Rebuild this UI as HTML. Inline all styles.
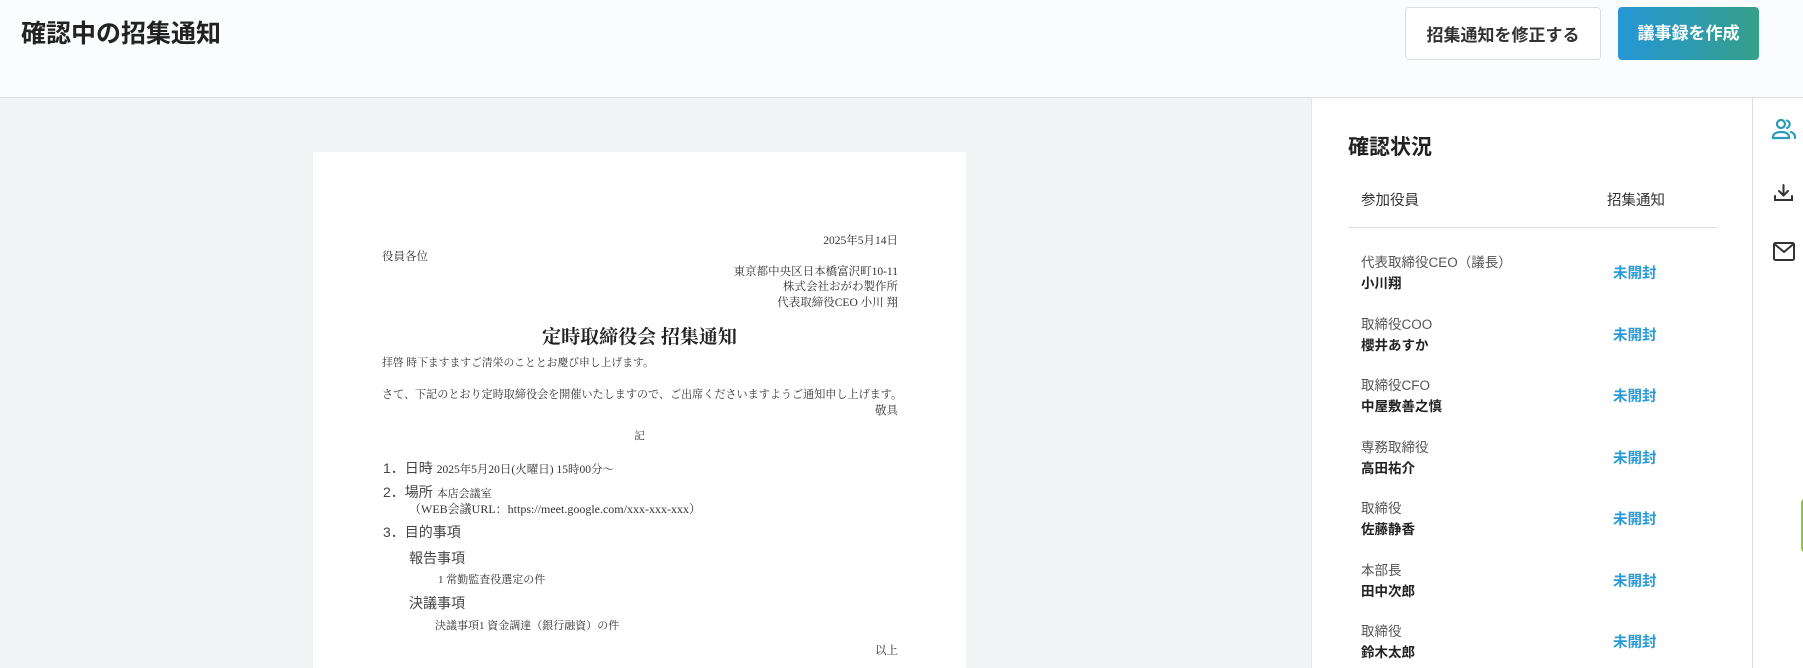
<!DOCTYPE html>
<html><head><meta charset="utf-8"><style>
*{margin:0;padding:0;box-sizing:border-box}
body{width:1803px;height:668px;overflow:hidden;background:#f2f3f4;font-family:"Liberation Sans","Noto Sans CJK JP",sans-serif;color:#222;position:relative}
.a{position:absolute;white-space:nowrap}
#hdr{position:absolute;left:0;top:0;width:1803px;height:98px;background:#fbfcfd;border-bottom:1px solid #dcdde0}
.btn{position:absolute;top:7px;height:53px;border-radius:4px;font-weight:bold;font-size:17px;display:flex;align-items:center;justify-content:center}
.pap{position:absolute;left:313px;top:152px;width:653px;height:516px;background:#fff;overflow:hidden}
.s{font-family:"Liberation Serif","Noto Serif CJK SC",serif;color:#333}
.p{position:absolute;left:1311px;top:98px;width:441px;height:570px;background:#fff;border-left:1px solid #e6e7e9}
.ic{position:absolute;left:1752px;top:98px;width:51px;height:570px;background:#fff;border-left:1px solid #dcdde0}
.role{font-size:13.5px;color:#555}
.nm{font-size:13.5px;font-weight:bold;color:#222}
.st{font-size:14.5px;font-weight:bold;color:#2a9bd6}
</style></head><body>
<div id="hdr">
<div class="a" style="left:21px;top:14px;font-size:25px;font-weight:bold;color:#222">確認中の招集通知</div>
<div class="btn" style="left:1405px;width:196px;background:#fff;border:1px solid #dcdde0;color:#333">招集通知を修正する</div>
<div class="btn" style="left:1618px;width:141px;background:linear-gradient(90deg,#2596d6,#35a08a);color:#fff;padding-bottom:4px">議事録を作成</div>
</div>
<div class="pap">
<div class="s" style="position:absolute;left:0;top:0;width:653px;height:530px;font-size:11.5px">
<div class="a" style="right:68px;top:80px">2025年5月14日</div>
<div class="a" style="left:69px;top:96px">役員各位</div>
<div class="a" style="right:68px;top:111px">東京都中央区日本橋富沢町10-11</div>
<div class="a" style="right:68px;top:126px">株式会社おがわ製作所</div>
<div class="a" style="right:68px;top:142px">代表取締役CEO 小川 翔</div>
<div class="a" style="left:0;width:653px;text-align:center;top:170px;font-size:19px;font-weight:bold;color:#222">定時取締役会 招集通知</div>
<div class="a" style="left:69px;top:203px;font-size:10.8px">拝啓 時下ますますご清栄のこととお慶び申し上げます。</div>
<div class="a" style="left:69px;top:234px;font-size:11.1px">さて、下記のとおり定時取締役会を開催いたしますので、ご出席くださいますようご通知申し上げます。</div>
<div class="a" style="right:68px;top:250px">敬具</div>
<div class="a" style="left:0;width:653px;text-align:center;top:276px;font-size:10.5px">記</div>
<div class="a" style="left:70px;top:306px;font-size:14px;font-family:'Liberation Sans','Noto Sans CJK JP',sans-serif;color:#444">1．日時 <span class="s" style="font-size:11.5px">2025年5月20日(火曜日) 15時00分～</span></div>
<div class="a" style="left:70px;top:330px;font-size:14px;font-family:'Liberation Sans','Noto Sans CJK JP',sans-serif;color:#444">2．場所 <span class="s" style="font-size:11px">本店会議室</span></div>
<div class="a" style="left:96px;top:348px;font-size:12px">（WEB会議URL：https://meet.google.com/xxx-xxx-xxx）</div>
<div class="a" style="left:70px;top:370px;font-size:14px;font-family:'Liberation Sans','Noto Sans CJK JP',sans-serif;color:#444">3．目的事項</div>
<div class="a" style="left:96px;top:396px;font-size:14px;font-family:'Liberation Sans','Noto Sans CJK JP',sans-serif;color:#444">報告事項</div>
<div class="a" style="left:125px;top:419px;font-size:11px">1 常勤監査役選定の件</div>
<div class="a" style="left:96px;top:441px;font-size:14px;font-family:'Liberation Sans','Noto Sans CJK JP',sans-serif;color:#444">決議事項</div>
<div class="a" style="left:122px;top:465px;font-size:11px">決議事項1 資金調達（銀行融資）の件</div>
<div class="a" style="right:68px;top:490px">以上</div>
</div></div>
<div class="p">
<div class="a" style="left:36px;top:33px;font-size:21px;font-weight:bold">確認状況</div>
<div class="a" style="left:49px;top:91px;font-size:14.5px;color:#333">参加役員</div>
<div class="a" style="left:295px;top:91px;font-size:14.5px;color:#333">招集通知</div>
<div style="position:absolute;left:36px;top:129px;width:369px;height:1px;background:#dcdde0"></div>
<div class="a" style="left:49px;top:154px;line-height:21px"><div class="role">代表取締役CEO（議長）</div><div class="nm">小川翔</div></div><div class="a st" style="left:301px;top:164px">未開封</div>
<div class="a" style="left:49px;top:216px;line-height:21px"><div class="role">取締役COO</div><div class="nm">櫻井あすか</div></div><div class="a st" style="left:301px;top:226px">未開封</div>
<div class="a" style="left:49px;top:277px;line-height:21px"><div class="role">取締役CFO</div><div class="nm">中屋敷善之慎</div></div><div class="a st" style="left:301px;top:287px">未開封</div>
<div class="a" style="left:49px;top:339px;line-height:21px"><div class="role">専務取締役</div><div class="nm">高田祐介</div></div><div class="a st" style="left:301px;top:349px">未開封</div>
<div class="a" style="left:49px;top:400px;line-height:21px"><div class="role">取締役</div><div class="nm">佐藤静香</div></div><div class="a st" style="left:301px;top:410px">未開封</div>
<div class="a" style="left:49px;top:462px;line-height:21px"><div class="role">本部長</div><div class="nm">田中次郎</div></div><div class="a st" style="left:301px;top:472px">未開封</div>
<div class="a" style="left:49px;top:523px;line-height:21px"><div class="role">取締役</div><div class="nm">鈴木太郎</div></div><div class="a st" style="left:301px;top:533px">未開封</div>
</div>
<div class="ic">
<svg style="position:absolute;left:18px;top:20px" width="26" height="22" viewBox="0 0 26 22" fill="none" stroke="#2a9bb8" stroke-width="2.2" stroke-linecap="round"><circle cx="10" cy="6" r="4"/><path d="M2 20v-1c0-3 3-5 8-5s8 2 8 5v1z"/><path d="M16 2.5a4 4 0 0 1 0 7.5M20 14c2.5 1 4 2.5 4 5v1"/></svg>
<svg style="position:absolute;left:20px;top:86px" width="21" height="18" viewBox="0 0 21 18" fill="none" stroke="#333" stroke-width="2" stroke-linecap="round"><path d="M10.5 1v10M6 7l4.5 4.5L15 7M2 12v4h17v-4"/></svg>
<svg style="position:absolute;left:20px;top:144px" width="22" height="19" viewBox="0 0 22 19" fill="none" stroke="#333" stroke-width="2"><rect x="1" y="1" width="20" height="17" rx="1.5"/><path d="M1.5 2l9.5 8 9.5-8"/></svg>
<div style="position:absolute;left:48px;top:400px;width:10px;height:55px;border:2px solid #8cc63f;border-radius:5px"></div>
</div>
</body></html>
